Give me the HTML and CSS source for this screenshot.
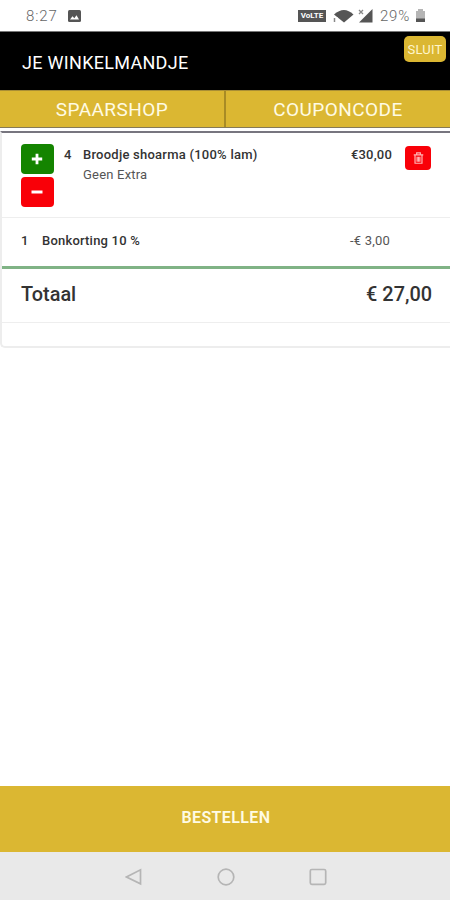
FILE: index.html
```html
<!DOCTYPE html>
<html lang="nl">
<head>
<meta charset="utf-8">
<title>Je winkelmandje</title>
<link rel="stylesheet" href="styles.css">
</head>
<body>
<div class="screen">
  <div class="status">
    <span class="time">8:27</span>
    <svg class="photo" width="13" height="12" viewBox="0 0 13 12"><rect width="13" height="12" rx="1.500" fill="#555"/><path d="M2 9.500l2.500-3.200 1.800 2 2.200-3L11 9.500z" fill="#fff"/></svg>
    <span class="volte">VoLTE</span>
    <svg class="wifi" width="21" height="14" viewBox="0 0 21 14"><path d="M1 5.500Q11-3.500 20.500 5.500L11 13.500z" fill="#555"/><path d="M0 8h4.500v6H0z" fill="#fff"/><path d="M1.500 9v4" stroke="#888" stroke-width="1.500"/></svg>
    <svg class="signal" width="15" height="14" viewBox="0 0 15 14"><path d="M14.500 0v13.500H1z" fill="#555"/><path d="M1 1l4 4M5 1L1 5" stroke="#888" stroke-width="1.300"/></svg>
    <span class="percent">29%</span>
    <svg class="battery" width="9" height="13" viewBox="0 0 9 13"><path d="M0 2h2V0h5v2h2v8H0z" fill="#b5b5b5"/><path d="M0 9.500h9V13H0z" fill="#555"/></svg>
  </div>
  <header class="header">
    <h1><span>JE WINKELMANDJE</span></h1>
    <button class="close">SLUIT</button>
  </header>
  <nav class="tabs">
    <a class="tab">SPAARSHOP</a>
    <a class="tab coupon">COUPONCODE</a>
  </nav>
  <main class="card">
    <section class="item">
      <div class="steppers">
        <button class="step plus"><svg width="12" height="12" viewBox="0 0 12 12"><path d="M6 .8v10.400M.8 6h10.400" stroke="#fff" stroke-width="2.800"/></svg></button>
        <button class="step minus"><svg width="12" height="12" viewBox="0 0 12 12"><path d="M.5 6h11" stroke="#fff" stroke-width="3"/></svg></button>
      </div>
      <span class="qty">4</span>
      <div class="product">
        <div class="name">Broodje shoarma (100% lam)</div>
        <div class="extra">Geen Extra</div>
      </div>
      <span class="price">€30,00</span>
      <button class="trash"><svg width="11" height="12" viewBox="0 0 12 13" fill="none" stroke="#ffb5b5" stroke-width="1.300"><path d="M.8 3h10.400M4 3V1h4v2M2.200 3v9.200h7.600V3M4.500 5v5.500M6 5v5.500M7.500 5v5.500"/></svg></button>
    </section>
    <section class="discount">
      <span class="count">1</span>
      <span class="label">Bonkorting 10 %</span>
      <span class="amount">-€ 3,00</span>
    </section>
    <section class="total">
      <span class="total-label">Totaal</span>
      <span class="total-value">€ 27,00</span>
    </section>
    <div class="card-end"></div>
  </main>
  <button class="order"><span>BESTELLEN</span></button>
  <div class="navbar">
    <svg width="17" height="18" viewBox="0 0 17 18"><path d="M15.500 1.800v14L1.500 9z"/></svg>
    <svg width="18" height="18" viewBox="0 0 18 18"><circle cx="9" cy="9" r="7.800"/></svg>
    <svg width="18" height="18" viewBox="0 0 18 18"><rect x="1.300" y="1.500" width="15.400" height="14.800" rx="1.500"/></svg>
  </div>
</div>
</body>
</html>
```
FILE: styles.css
```css
* { box-sizing: border-box; }
body { margin: 0; background: #fff; font-family: Roboto, "Liberation Sans", sans-serif; }
button { border: 0; padding: 0; font-family: inherit; color: #fff; }
svg { display: block; flex: none; }
span, .name, .extra { white-space: nowrap; }

.screen { width: 450px; height: 900px; display: flex; flex-direction: column; }

.status { height: 32px; border-bottom: 1px solid #777; display: flex; align-items: center; padding: 0 25px 0 26px; color: #777; }
.time { width: 42px; font-size: 15px; letter-spacing: .9px; }
.time, .percent { font-weight: 300; color: #666; }
.volte { margin-left: auto; width: 28px; height: 12px; background: #555; color: #fff; font-size: 8px; line-height: 12px; font-weight: 700; text-align: center; }
.wifi { margin-left: 7px; }
.signal { margin-left: 4px; }
.percent { width: 34px; margin-left: 7px; font-size: 15px; letter-spacing: .8px; }
.battery { margin-left: 2px; }

.header { height: 58px; background: #000; display: flex; align-items: flex-start; justify-content: space-between; padding: 4px 4px 0 22px; }
h1 { margin: 16px 0 0; font-size: 18px; line-height: 21px; font-weight: 400; letter-spacing: .3px; color: #fff; }
.close { width: 42px; height: 26px; border-radius: 5px; background: #dbb732; font-size: 13px; letter-spacing: .2px; color: #fff6cc; }

.tabs { height: 38px; display: flex; border-top: 1px solid #a98e35; border-bottom: 1px solid #857a58; }
.tab { flex: 1; background: #dbb732; color: #fffbe4; font-size: 19px; letter-spacing: .45px; line-height: 37px; text-align: center; }
.coupon { border-left: 2px solid #a88b25; }

.card { height: 217px; margin-top: 3px; border-top: 2px solid #77757f; border-left: 2px solid #ededed; border-bottom: 2px solid #ededed; border-bottom-left-radius: 5px; color: #333; }
.item { height: 85px; border-bottom: 1px solid #eee; display: flex; align-items: flex-start; padding: 11px 19px 0 19px; font-size: 13px; line-height: 20px; }
.steppers { display: flex; flex-direction: column; gap: 3px; }
.step { width: 33px; height: 30px; border-radius: 4px; display: flex; align-items: center; justify-content: center; }
.step svg { margin-right: 1px; }
.plus { background: #148400; }
.minus { background: #f90008; }
.qty { width: 19px; margin-left: 10px; font-weight: 500; }
.product { padding-top: 1px; }
.qty, .price { padding-top: 1px; }
.name { font-weight: 500; letter-spacing: .24px; }
.extra { color: #555; letter-spacing: .2px; line-height: 19px; }
.price { margin-left: auto; font-weight: 500; letter-spacing: .2px; }
.trash { width: 26px; height: 24px; margin: 2px 0 0 13px; border-radius: 4px; background: #f90008; display: flex; align-items: center; justify-content: center; }

.discount { height: 48px; display: flex; align-items: center; padding: 0 60px 4px 19px; font-size: 13px; letter-spacing: .2px; }
.count { width: 21px; font-weight: 500; }
.label { font-weight: 500; }
.amount { margin-left: auto; color: #555; }

.total { height: 57px; border-top: 3px solid #80b385; border-bottom: 1px solid #eee; display: flex; align-items: center; justify-content: space-between; padding: 0 18px 2px 19px; font-size: 19.900px; font-weight: 500; }

.order { height: 66px; margin-top: auto; background: #dbb732; color: #fffbe4; font-size: 16px; font-weight: 600; letter-spacing: .4px; padding-bottom: 4px; padding-left: 2px; }
.navbar { height: 48px; background: #e9e9e9; display: flex; justify-content: space-between; align-items: center; padding: 1px 123px 0 125px; fill: none; stroke: #b5b5b5; stroke-width: 1.700px; }
```
